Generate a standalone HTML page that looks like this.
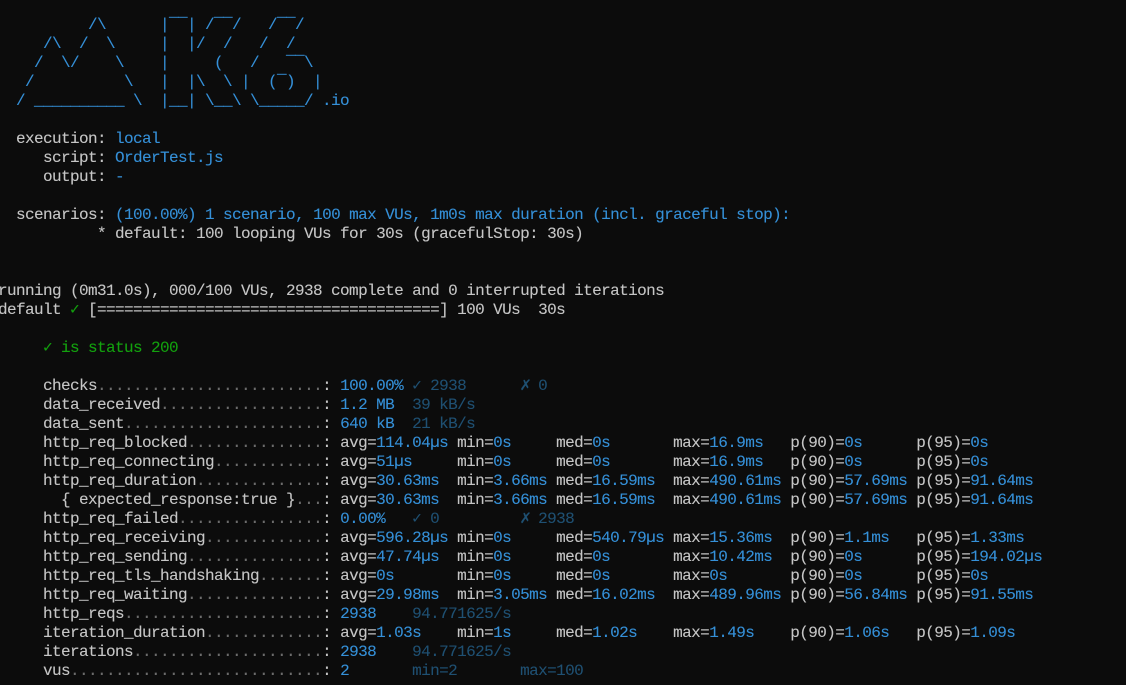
<!DOCTYPE html>
<html>
<head>
<meta charset="utf-8">
<style>
html,body{margin:0;padding:0;background:#0c0c0c;width:1126px;height:685px;overflow:hidden}
pre{position:absolute;left:-2px;top:16px;margin:0;font-family:"Liberation Mono","DejaVu Sans Mono",monospace;font-size:16px;letter-spacing:-0.6px;line-height:19px;color:#c6c6c6;white-space:pre;-webkit-text-stroke:0.1px}
.b{color:#3590d8}
.d{color:#1f5072}
.g{color:#13a10e}
.f{color:#6c6c6c}
.i{display:inline-block;width:9px;letter-spacing:0;font-family:"DejaVu Sans Mono",monospace;font-size:16px;line-height:1px;text-align:center}
.x{font-size:18px}
</style>
</head>
<body>
<pre><span class="b">          /\      |‾‾| /‾‾/   /‾‾/
     /\  /  \     |  |/  /   /  /
    /  \/    \    |     (   /   ‾‾\
   /          \   |  |\  \ |  (‾)  |
  / __________ \  |__| \__\ \_____/ .io</span>

  execution: <span class="b">local</span>
     script: <span class="b">OrderTest.js</span>
     output: <span class="b">-</span>

  scenarios: <span class="b">(100.00%) 1 scenario, 100 max VUs, 1m0s max duration (incl. graceful stop):</span>
           * default: 100 looping VUs for 30s (gracefulStop: 30s)


running (0m31.0s), 000/100 VUs, 2938 complete and 0 interrupted iterations
default <span class="g i">✓</span> [======================================] 100 VUs  30s

     <span class="g"><span class="i">✓</span> is status 200</span>

     checks<span class="f">.........................</span>: <span class="b">100.00%</span> <span class="d"><span class="i">✓</span> 2938</span>      <span class="d"><span class="i x">✗</span> 0</span>
     data_received<span class="f">..................</span>: <span class="b">1.2 MB</span>  <span class="d">39 kB/s</span>
     data_sent<span class="f">......................</span>: <span class="b">640 kB</span>  <span class="d">21 kB/s</span>
     http_req_blocked<span class="f">...............</span>: avg=<span class="b">114.04µs</span> min=<span class="b">0s</span>     med=<span class="b">0s</span>       max=<span class="b">16.9ms</span>   p(90)=<span class="b">0s</span>      p(95)=<span class="b">0s</span>
     http_req_connecting<span class="f">............</span>: avg=<span class="b">51µs</span>     min=<span class="b">0s</span>     med=<span class="b">0s</span>       max=<span class="b">16.9ms</span>   p(90)=<span class="b">0s</span>      p(95)=<span class="b">0s</span>
     http_req_duration<span class="f">..............</span>: avg=<span class="b">30.63ms</span>  min=<span class="b">3.66ms</span> med=<span class="b">16.59ms</span>  max=<span class="b">490.61ms</span> p(90)=<span class="b">57.69ms</span> p(95)=<span class="b">91.64ms</span>
       { expected_response:true }<span class="f">...</span>: avg=<span class="b">30.63ms</span>  min=<span class="b">3.66ms</span> med=<span class="b">16.59ms</span>  max=<span class="b">490.61ms</span> p(90)=<span class="b">57.69ms</span> p(95)=<span class="b">91.64ms</span>
     http_req_failed<span class="f">................</span>: <span class="b">0.00%</span>   <span class="d"><span class="i">✓</span> 0</span>         <span class="d"><span class="i x">✗</span> 2938</span>
     http_req_receiving<span class="f">.............</span>: avg=<span class="b">596.28µs</span> min=<span class="b">0s</span>     med=<span class="b">540.79µs</span> max=<span class="b">15.36ms</span>  p(90)=<span class="b">1.1ms</span>   p(95)=<span class="b">1.33ms</span>
     http_req_sending<span class="f">...............</span>: avg=<span class="b">47.74µs</span>  min=<span class="b">0s</span>     med=<span class="b">0s</span>       max=<span class="b">10.42ms</span>  p(90)=<span class="b">0s</span>      p(95)=<span class="b">194.02µs</span>
     http_req_tls_handshaking<span class="f">.......</span>: avg=<span class="b">0s</span>       min=<span class="b">0s</span>     med=<span class="b">0s</span>       max=<span class="b">0s</span>       p(90)=<span class="b">0s</span>      p(95)=<span class="b">0s</span>
     http_req_waiting<span class="f">...............</span>: avg=<span class="b">29.98ms</span>  min=<span class="b">3.05ms</span> med=<span class="b">16.02ms</span>  max=<span class="b">489.96ms</span> p(90)=<span class="b">56.84ms</span> p(95)=<span class="b">91.55ms</span>
     http_reqs<span class="f">......................</span>: <span class="b">2938</span>    <span class="d">94.771625/s</span>
     iteration_duration<span class="f">.............</span>: avg=<span class="b">1.03s</span>    min=<span class="b">1s</span>     med=<span class="b">1.02s</span>    max=<span class="b">1.49s</span>    p(90)=<span class="b">1.06s</span>   p(95)=<span class="b">1.09s</span>
     iterations<span class="f">.....................</span>: <span class="b">2938</span>    <span class="d">94.771625/s</span>
     vus<span class="f">............................</span>: <span class="b">2</span>       <span class="d">min=2</span>       <span class="d">max=100</span></pre>
</body>
</html>
